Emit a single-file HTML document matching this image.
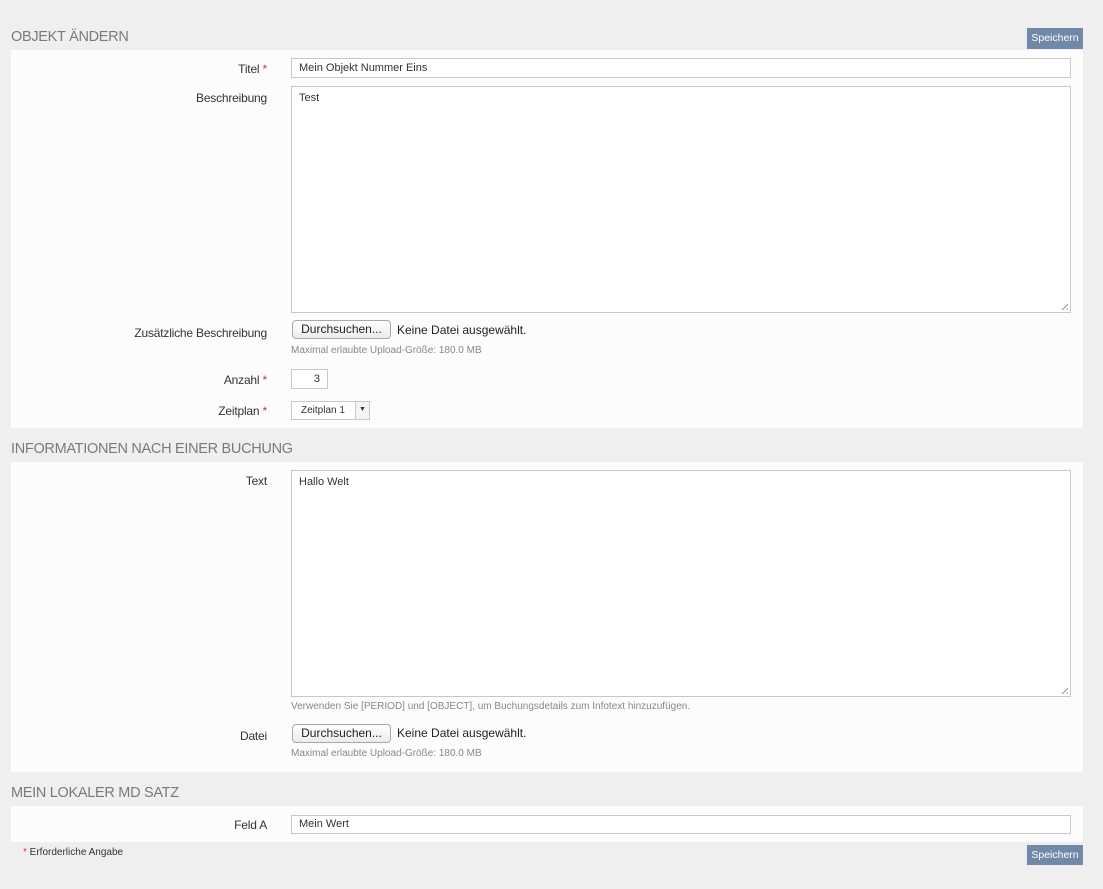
<!DOCTYPE html>
<html><head><meta charset="utf-8"><style>
*{box-sizing:border-box;margin:0;padding:0}
body{width:1103px;height:889px;background:#efefef;font-family:"Liberation Sans",sans-serif;color:#333;position:relative;overflow:hidden}
.a{position:absolute}
.h{position:absolute;left:11px;font-size:14.5px;color:#7a7a7a;letter-spacing:-0.3px}
.p{position:absolute;left:11px;width:1072px;background:#fcfcfc}
.l{position:absolute;right:836px;font-size:12px;color:#333;text-align:right;white-space:nowrap;letter-spacing:-0.2px}
.l b{color:#d33;font-weight:normal}
.in{position:absolute;left:291px;border:1px solid #c8c8c8;background:#fff;font-size:11px;color:#333;padding-left:7px}
.btn{position:absolute;left:1027px;width:56px;height:21px;background:#7189a9;color:#fff;font-size:10.5px;text-align:center;line-height:21px}
.fb{position:absolute;left:292px;width:99px;height:19px;border:1px solid #a8a8a8;border-radius:4px;background:linear-gradient(#fff,#ececec);font-size:12px;text-align:center;line-height:17px;color:#222}
.ft{position:absolute;left:397px;font-size:12px;color:#222}
.s{position:absolute;left:291px;font-size:10px;color:#888}
.grip{position:absolute;right:2px;bottom:2px;width:9px;height:9px;background:repeating-linear-gradient(135deg,transparent 0 2px,#999 2px 3px);clip-path:polygon(100% 0,100% 100%,0 100%)}
</style></head><body>
<div class="h" style="top:29px">OBJEKT ÄNDERN</div>
<div class="btn" style="top:28px">Speichern</div>
<div class="p" style="top:50px;height:378px"></div>
<div class="l" style="top:62px">Titel <b>*</b></div>
<div class="in" style="top:58px;width:780px;height:20px;line-height:18px">Mein Objekt Nummer Eins</div>
<div class="l" style="top:91px">Beschreibung</div>
<div class="in" style="top:86px;width:780px;height:227px;padding-top:5px">Test<div class="grip"></div></div>
<div class="l" style="top:326px">Zusätzliche Beschreibung</div>
<div class="fb" style="top:320px">Durchsuchen...</div>
<div class="ft" style="top:323px">Keine Datei ausgewählt.</div>
<div class="s" style="top:345px">Maximal erlaubte Upload-Größe: 180.0 MB</div>
<div class="l" style="top:373px">Anzahl <b>*</b></div>
<div class="in" style="top:369px;width:37px;height:20px;line-height:18px;text-align:right;padding-right:7px">3</div>
<div class="l" style="top:404px">Zeitplan <b>*</b></div>
<div class="in" style="top:401px;width:79px;height:19px;line-height:17px;font-size:10px;padding-left:9px">Zeitplan 1<div class="a" style="right:0;top:0;width:14px;height:17px;border-left:1px solid #ccc;background:#f4f4f4;font-size:7px;text-align:center;line-height:15px;padding:0">▼</div></div>
<div class="h" style="top:441px">INFORMATIONEN NACH EINER BUCHUNG</div>
<div class="p" style="top:462px;height:310px"></div>
<div class="l" style="top:474px">Text</div>
<div class="in" style="top:470px;width:780px;height:227px;padding-top:5px">Hallo Welt<div class="grip"></div></div>
<div class="s" style="top:701px">Verwenden Sie [PERIOD] und [OBJECT], um Buchungsdetails zum Infotext hinzuzufügen.</div>
<div class="l" style="top:729px">Datei</div>
<div class="fb" style="top:724px">Durchsuchen...</div>
<div class="ft" style="top:726px">Keine Datei ausgewählt.</div>
<div class="s" style="top:748px">Maximal erlaubte Upload-Größe: 180.0 MB</div>
<div class="h" style="top:785px">MEIN LOKALER MD SATZ</div>
<div class="p" style="top:806px;height:36px"></div>
<div class="l" style="top:818px">Feld A</div>
<div class="in" style="top:815px;width:780px;height:19px;line-height:17px">Mein Wert</div>
<div class="a" style="left:23px;top:847px;font-size:10px;color:#333"><span style="color:#d33">*</span> Erforderliche Angabe</div>
<div class="btn" style="top:845px;height:20px;line-height:20px">Speichern</div>
</body></html>
